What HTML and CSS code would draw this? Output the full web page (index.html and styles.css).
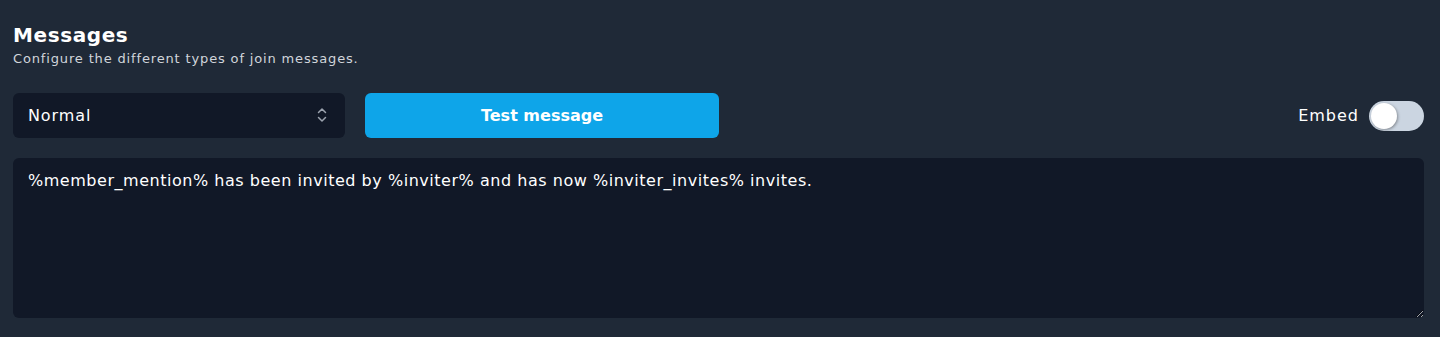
FILE: index.html
```html
<!DOCTYPE html>
<html lang="en">
<head>
  <meta charset="UTF-8">
  <meta name="viewport" content="width=device-width, initial-scale=1.0">
  <title>Messages</title>
  <link rel="stylesheet" href="styles.css">
</head>
<body>
<div class="section">
  <div class="section-header">
    <h2 class="section-title">Messages</h2>
    <p class="section-desc">Configure the different types of join messages.</p>
  </div>

  <div class="controls">
    <div class="select-wrap">
      <select class="select" id="message-type">
        <option>Normal</option>
        <option>Vanity</option>
        <option>Unknown</option>
      </select>
      <svg class="select-icon" width="12" height="18" viewBox="0 0 12 18" fill="none" stroke="#9ca3af" stroke-width="1.5" stroke-linecap="round" stroke-linejoin="round">
        <path d="M2.5 6.5 L6 3 L9.5 6.5"/>
        <path d="M2.5 11.5 L6 15 L9.5 11.5"/>
      </svg>
    </div>
    <button class="button">Test message</button>
    <label class="toggle">
      <span class="toggle-label">Embed</span>
      <input type="checkbox" class="toggle-input">
      <span class="toggle-track"><span class="toggle-knob"></span></span>
    </label>
  </div>

  <textarea class="message-input">%member_mention% has been invited by %inviter% and has now %inviter_invites% invites.</textarea>
</div>
</body>
</html>
```

FILE: styles.css
```css
* {
    margin: 0;
    padding: 0;
    box-sizing: border-box;
}

body {
    font-family: "DejaVu Sans", Inter, sans-serif;
    background-color: #1f2937;
    color: white;
    height: 337px;
    overflow: hidden;
}

.section {
    padding: 21px 16px 0 13px;
}

.section-title {
    font-size: 20px;
    line-height: 28px;
    font-weight: 700;
    letter-spacing: 0.6px;
}

.section-desc {
    font-size: 13px;
    line-height: 20px;
    color: #d1d5db;
    letter-spacing: 0.85px;
}

.controls {
    display: flex;
    align-items: center;
    gap: 20px;
    margin-top: 24px;
}

.select-wrap {
    position: relative;
    width: 332px;
}

.select {
    -webkit-appearance: none;
    appearance: none;
    width: 100%;
    height: 45px;
    background-color: #111827;
    color: white;
    border: none;
    border-radius: 6px;
    padding: 0 40px 0 15px;
    font-family: inherit;
    font-size: 16px;
    letter-spacing: 0.9px;
    outline: none;
}

.select-icon {
    position: absolute;
    right: 17px;
    top: 13px;
    pointer-events: none;
}

.button {
    width: 354px;
    height: 45px;
    border: none;
    border-radius: 6px;
    background-color: #0ea5e9;
    color: white;
    font-family: inherit;
    font-size: 16px;
    font-weight: 700;
    cursor: pointer;
}

.toggle {
    margin-left: auto;
    display: flex;
    align-items: center;
    gap: 10px;
    cursor: pointer;
}

.toggle-label {
    font-size: 16px;
    letter-spacing: 1px;
}

.toggle-input {
    display: none;
}

.toggle-track {
    width: 55px;
    height: 30px;
    border-radius: 15px;
    background-color: #cbd5e1;
    display: flex;
    align-items: center;
    padding: 0 2px;
}

.toggle-knob {
    width: 26px;
    height: 26px;
    border-radius: 50%;
    background-color: white;
    box-shadow: 1px 1px 3px rgba(0, 0, 0, 0.35);
    transition: transform 0.2s;
}

.toggle-input:checked + .toggle-track .toggle-knob {
    transform: translateX(25px);
}

.message-input {
    display: block;
    width: 100%;
    height: 160px;
    margin-top: 20px;
    background-color: #111827;
    color: white;
    border: none;
    border-radius: 6px;
    padding: 11px 15px;
    font-family: inherit;
    font-size: 16px;
    line-height: 24px;
    letter-spacing: 0.53px;
    outline: none;
}
```
